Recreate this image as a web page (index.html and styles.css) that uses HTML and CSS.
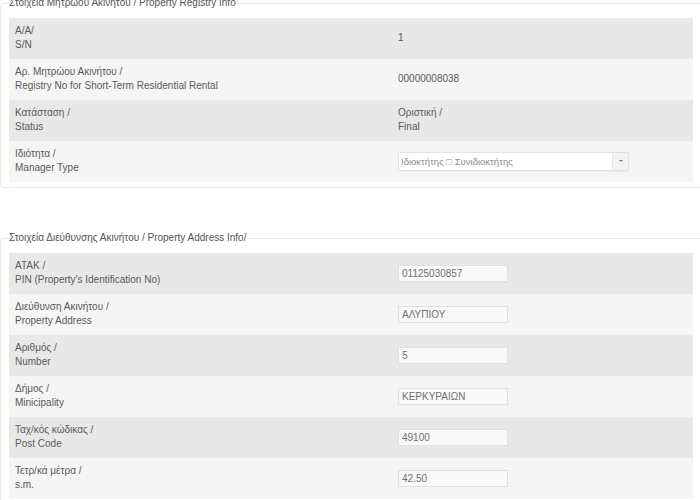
FILE: index.html
```html
<!DOCTYPE html>
<html lang="el">
<head>
    <meta charset="UTF-8">
    <meta name="viewport" content="width=device-width, initial-scale=1.0">
    <title>Στοιχεία Ακινήτου</title>
    <link rel="stylesheet" href="styles.css">
</head>
<body>
    <fieldset class="box first">
        <legend>Στοιχεία Μητρώου Ακινήτου / Property Registry Info</legend>
        <table class="info">
            <tr>
                <td class="label">Α/Α/<br>S/N</td>
                <td>1</td>
            </tr>
            <tr>
                <td class="label">Αρ. Μητρώου Ακινήτου /<br>Registry No for Short-Term Residential Rental</td>
                <td>00000008038</td>
            </tr>
            <tr>
                <td class="label">Κατάσταση /<br>Status</td>
                <td>Οριστική /<br>Final</td>
            </tr>
            <tr>
                <td class="label">Ιδιότητα /<br>Manager Type</td>
                <td>
                    <div class="select">
                        <span class="select-text">Ιδιοκτήτης □ Συνιδιοκτήτης</span>
                        <span class="select-btn"><span class="caret"></span></span>
                    </div>
                </td>
            </tr>
        </table>
    </fieldset>

    <fieldset class="box second">
        <legend>Στοιχεία Διεύθυνσης Ακινήτου / Property Address Info/</legend>
        <table class="info">
            <tr>
                <td class="label">ΑΤΑΚ /<br>PIN (Property's Identification No)</td>
                <td><input class="field" type="text" value="01125030857" readonly></td>
            </tr>
            <tr>
                <td class="label">Διεύθυνση Ακινήτου /<br>Property Address</td>
                <td><input class="field" type="text" value="ΑΛΥΠΙΟΥ" readonly></td>
            </tr>
            <tr>
                <td class="label">Αριθμός /<br>Number</td>
                <td><input class="field" type="text" value="5" readonly></td>
            </tr>
            <tr>
                <td class="label">Δήμος /<br>Minicipality</td>
                <td><input class="field" type="text" value="ΚΕΡΚΥΡΑΙΩΝ" readonly></td>
            </tr>
            <tr>
                <td class="label">Ταχ/κός κώδικας /<br>Post Code</td>
                <td><input class="field" type="text" value="49100" readonly></td>
            </tr>
            <tr>
                <td class="label">Τετρ/κά μέτρα /<br>s.m.</td>
                <td><input class="field" type="text" value="42.50" readonly></td>
            </tr>
        </table>
    </fieldset>
</body>
</html>
```

FILE: styles.css
```css
body {
    font-family: "Liberation Sans", Arial, sans-serif;
    font-size: 10px;
    color: #5a5a5a;
    background: #fff;
    margin: 0;
    overflow: hidden;
}
.box {
    border: 1px solid #ebe8df;
    border-radius: 4px;
    margin: 0 -12px 0 0;
    padding: 8px 8px 5px 8px;
    min-width: 0;
}
.box legend {
    padding: 0 2px 0 0;
    margin-left: 0;
    line-height: 14px;
    font-size: 10px;
    color: #555;
}
.first {
    margin-top: -4px;
}
.second {
    margin-top: 43px;
}
.info {
    width: 684px;
    border-collapse: collapse;
}
.info tr:nth-child(odd) {
    background: #e8e8e8;
}
.info tr:nth-child(even) {
    background: #f5f5f5;
}
.info td {
    height: 28px;
    padding: 6px 6px 7px;
    line-height: 14px;
    vertical-align: middle;
}
.info td.label {
    width: 371px;
}
.field {
    display: block;
    width: 110px;
    height: 17px;
    box-sizing: border-box;
    margin: 0;
    padding: 0 3px;
    border: 1px solid #e0e0e0;
    background: #f9f9f9;
    font-family: "Liberation Sans", Arial, sans-serif;
    font-size: 10px;
    color: #707070;
    outline: none;
}
.select {
    display: flex;
    width: 231px;
    height: 19px;
    box-sizing: border-box;
    border: 1px solid #e2e2e2;
    border-radius: 2px;
    background: #fff;
    box-shadow: 0 1px 1px rgba(0, 0, 0, 0.04);
}
.select-text {
    flex: 1;
    padding-left: 2px;
    line-height: 17px;
    font-size: 9.5px;
    color: #8a8a8a;
}
.select-btn {
    width: 15px;
    display: flex;
    align-items: center;
    justify-content: center;
    border-left: 1px solid #e6e6e6;
    background: #f3f3f3;
}
.caret {
    width: 0;
    height: 0;
    border-left: 2px solid transparent;
    border-right: 2px solid transparent;
    border-top: 2px solid #777;
}
```
